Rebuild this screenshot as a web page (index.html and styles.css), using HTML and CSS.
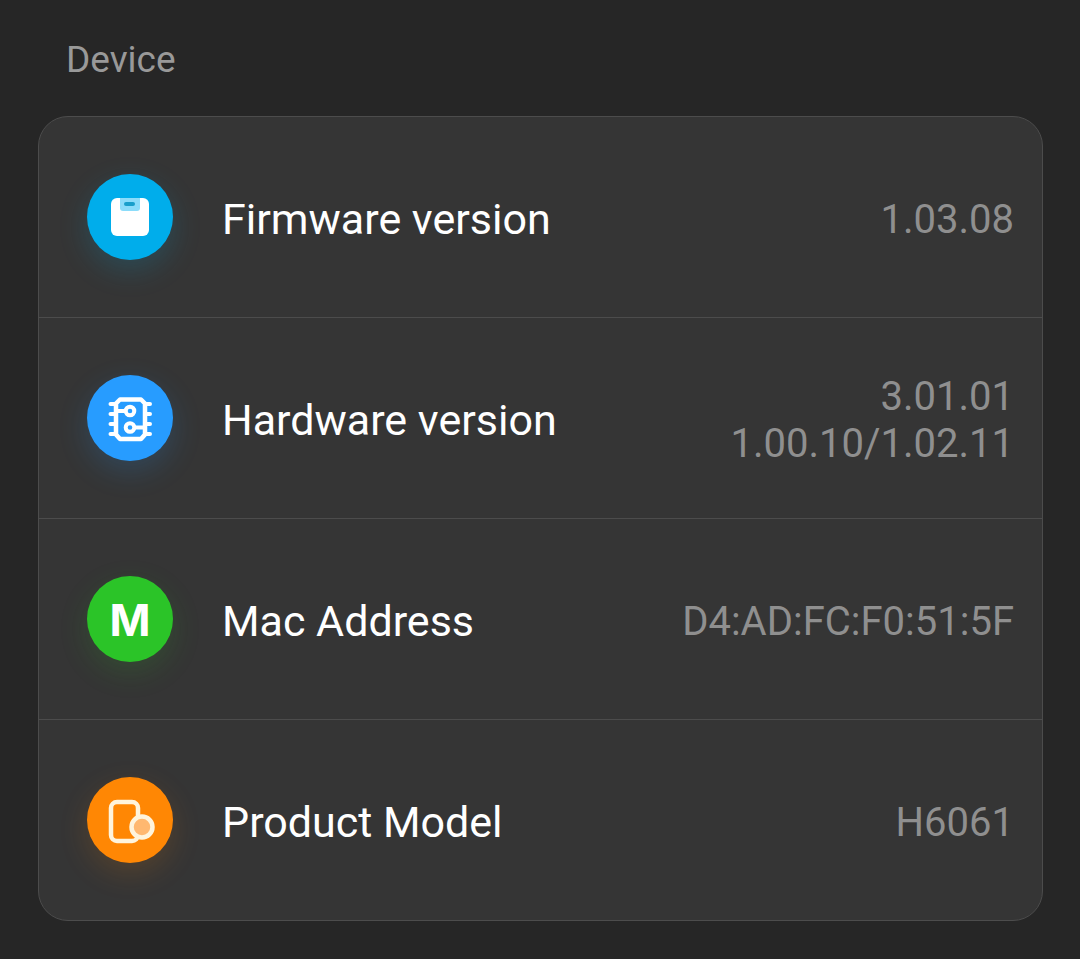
FILE: index.html
```html
<!DOCTYPE html>
<html lang="en">
<head>
<meta charset="utf-8">
<meta name="viewport" content="width=device-width, initial-scale=1">
<title>Device</title>
<link rel="stylesheet" href="styles.css">
</head>
<body>
<main class="page">
  <h1 class="section-title">Device</h1>
  <dl class="card">
    <div class="row">
      <span class="icon icon-firmware" aria-hidden="true">
        <svg viewBox="0 0 86 86">
          <rect x="24" y="24" width="38" height="38" rx="6" fill="#fff"/>
          <path d="M33 24h20v10a3 3 0 0 1-3 3H36a3 3 0 0 1-3-3z" fill="#8bdcfa"/>
          <rect x="37" y="28" width="11" height="4" rx="2" fill="#199fcb"/>
        </svg>
      </span>
      <dt class="label">Firmware version</dt>
      <dd class="value">1.03.08</dd>
    </div>
    <div class="row">
      <span class="icon icon-hardware" aria-hidden="true">
        <svg viewBox="0 0 86 86" fill="none" stroke="#fff" stroke-width="4" stroke-linecap="round">
          <path d="M33 24.500h21l4 4v31l-4 4.500H33l-4-4.500v-31z" stroke-width="4.500" stroke-linejoin="round"/>
          <path d="M23.500 29h5M23.500 39h5M23.500 49h5M23.500 59h5M58 29h5M58 39h5M58 49h5M58 59h5"/>
          <path d="M29 36h9M48 52.500h9"/>
          <circle cx="43" cy="36" r="4.300"/>
          <circle cx="43" cy="52.500" r="4.300"/>
        </svg>
      </span>
      <dt class="label">Hardware version</dt>
      <dd class="value">3.01.01<br>1.00.10/1.02.11</dd>
    </div>
    <div class="row">
      <span class="icon icon-mac" aria-hidden="true">M</span>
      <dt class="label">Mac Address</dt>
      <dd class="value">D4:AD:FC:F0:51:5F</dd>
    </div>
    <div class="row">
      <span class="icon icon-model" aria-hidden="true">
        <svg viewBox="0 0 86 86" stroke="#fff4dc" stroke-width="4.500">
          <rect x="24" y="25" width="27" height="39" rx="6" fill="none"/>
          <circle cx="55" cy="50" r="10.500" fill="#ffb870"/>
        </svg>
      </span>
      <dt class="label">Product Model</dt>
      <dd class="value">H6061</dd>
    </div>
  </dl>
</main>
</body>
</html>
```
FILE: styles.css
```css
* {
  box-sizing: border-box;
}

body {
  margin: 0;
  background: #262626;
  color: #fff;
  font-family: Roboto, "Liberation Sans", sans-serif;
}

.page {
  padding: 36px 37px 40px 38px;
}

.section-title {
  margin: 0 28px 32px;
  color: #999;
  font-size: 37px;
  font-weight: 400;
  line-height: 48px;
}

.card {
  margin: 0;
  border: 1px solid #4c4c4c;
  border-radius: 30px;
  background: #353535;
}

.row {
  box-sizing: content-box;
  display: flex;
  align-items: center;
  min-height: 200px;
  padding: 0 28px 0 48px;
}

.row + .row {
  border-top: 1px solid #4c4c4c;
}

.icon {
  display: flex;
  flex: none;
  align-items: center;
  justify-content: center;
  width: 86px;
  height: 86px;
  margin-bottom: 1px;
  border-radius: 50%;
}

.icon svg {
  width: 100%;
  height: 100%;
}

.icon-firmware {
  background: #00adeb;
  box-shadow: 0 10px 30px #00adeb30;
}

.icon-hardware {
  background: #279cff;
  box-shadow: 0 10px 30px #279cff30;
}

.icon-mac {
  padding-top: 2px;
  background: #2bc428;
  box-shadow: 0 10px 30px #2bc42828;
  font-family: Inter, "Liberation Sans", sans-serif;
  font-size: 44px;
  font-weight: 700;
  line-height: 48px;
}

.icon-model {
  background: #ff8704;
  box-shadow: 0 10px 30px #ff870428;
}

.label {
  margin-left: 49px;
  padding-top: 4px;
  font-size: 43px;
  line-height: 48px;
}

.value {
  flex: 1;
  margin: 0;
  padding-top: 4px;
  color: #8f8f8f;
  font-size: 40px;
  line-height: 47px;
  text-align: right;
}
```
